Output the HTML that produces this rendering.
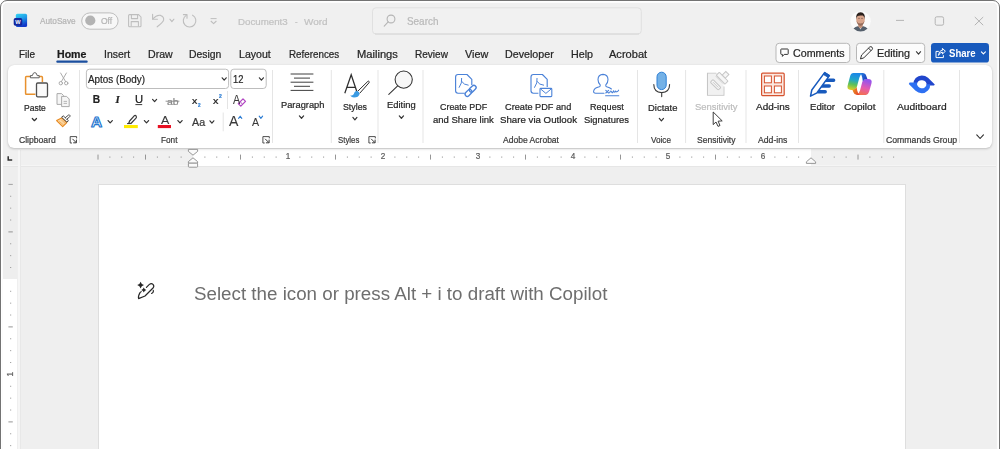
<!DOCTYPE html>
<html lang="en">
<head>
<meta charset="utf-8">
<title>Document3 - Word</title>
<style>
*{box-sizing:border-box;margin:0;padding:0}
html,body{width:1000px;height:449px;overflow:hidden;background:#fff}
body{font-family:"Liberation Sans", sans-serif;position:relative}
#win{position:absolute;left:0;top:0;width:1000px;height:470px;background:#f0f0f0;border:1.25px solid #737373;border-radius:7px;box-shadow:inset 0 0 0 1.8px #fff}
#docbg{position:absolute;left:3px;top:167px;width:993px;height:300px;background:#efefef}
#hline{position:absolute;left:3px;top:165.4px;width:993px;height:2px;background:linear-gradient(#f5f5f5 0,#f5f5f5 50%,#e6e6e6 50%,#e6e6e6 100%)}
#vline{position:absolute;left:18.4px;top:150px;width:3px;height:320px;background:linear-gradient(90deg,#f6f6f6 0,#f6f6f6 66%,#e8e8e8 66%,#e8e8e8 100%)}
#hrw{position:absolute;left:193px;top:149px;width:617.5px;height:17px;background:#fff}
#vrg{position:absolute;left:3px;top:167px;width:14px;height:112.4px;background:#eeeeee}
#vrw{position:absolute;left:3px;top:279.4px;width:14px;height:200px;background:#fff}
#ribbon{position:absolute;left:8px;top:65.4px;width:984px;height:82.2px;background:#fff;border-radius:6px;box-shadow:0 1px 2.5px rgba(0,0,0,.20),0 0 1px rgba(0,0,0,.10)}
#page{position:absolute;left:98px;top:184.4px;width:808px;height:300px;background:#fff;border:1px solid #dedede}
svg#ic{position:absolute;left:0;top:0;width:1000px;height:449px;overflow:visible}
#txt{position:absolute;left:0;top:0;width:1000px;height:449px;will-change:transform}
.x{position:absolute;-webkit-text-stroke:0.22px currentColor;white-space:nowrap;line-height:1;transform-origin:0 50%;display:block}
.rn{font-size:8.2px;color:#5e5e5e;text-align:center}
</style>
</head>
<body>
<div id="win"></div>
<div id="docbg"></div>
<div id="hline"></div>
<div id="vline"></div>
<div id="hrw"></div>
<div id="vrg"></div>
<div id="vrw"></div>
<div id="ribbon"></div>
<div id="page"></div>
<svg id="ic" viewBox="0 0 1000 449">
<defs>
<linearGradient id="wg" x1="0" y1="0" x2="0.35" y2="1"><stop offset="0" stop-color="#35d6f2"/><stop offset="0.5" stop-color="#1f9ae8"/><stop offset="1" stop-color="#1238c8"/></linearGradient>
<linearGradient id="cp1" x1="0.2" y1="0" x2="0" y2="1"><stop offset="0" stop-color="#1b8ae6"/><stop offset="0.35" stop-color="#22a7c8"/><stop offset="0.62" stop-color="#5cc05a"/><stop offset="1" stop-color="#f1d21c"/></linearGradient>
<linearGradient id="cp2" x1="0.3" y1="0" x2="0" y2="1"><stop offset="0" stop-color="#9a55ea"/><stop offset="0.45" stop-color="#e45bb0"/><stop offset="1" stop-color="#f6753a"/></linearGradient>
<linearGradient id="cp3" x1="0" y1="0" x2="1" y2="0.6"><stop offset="0" stop-color="#2786e4"/><stop offset="1" stop-color="#1d3fc0"/></linearGradient>
<linearGradient id="cp4" x1="0" y1="0" x2="1" y2="0.6"><stop offset="0" stop-color="#e8a01c"/><stop offset="1" stop-color="#e8482c"/></linearGradient>
<clipPath id="avc"><circle cx="860.6" cy="21.3" r="10.1"/></clipPath>
</defs>
<rect x="15.8" y="13.8" width="11.3" height="13.3" rx="1.6" fill="url(#wg)"/>
<rect x="13.7" y="18" width="8.6" height="7.7" rx="1.8" fill="#13269c"/>
<text x="18" y="23.9" font-family="Liberation Sans, sans-serif" font-weight="bold" font-size="5.6" fill="#fff" text-anchor="middle">W</text>
<rect x="81.7" y="12.9" width="36.4" height="16.3" rx="8.15" fill="#f7f7f7" stroke="#bebebe" stroke-width="1"/>
<circle cx="90.3" cy="20.5" r="5.1" fill="#b3b3b3"/>
<g fill="none" stroke="#bebebe" stroke-width="1.05" stroke-linejoin="round"><path d="M128.6 15.6 Q128.6 14.6 129.6 14.6 H138.6 L141 17 V25.8 Q141 26.8 140 26.8 H129.6 Q128.6 26.8 128.6 25.8 Z"/><path d="M131.4 14.8 V18.6 H137.6 V14.8"/><path d="M131.2 26.6 V21.6 H138.4 V26.6"/></g>
<g fill="none" stroke="#bebebe" stroke-width="1.1" stroke-linecap="round" stroke-linejoin="round"><path d="M152.6 14.4 V19.2 H157.4"/><path d="M152.8 19 Q156.6 14.6 160.6 15.4 Q164.2 16.6 163.6 20.2 Q163.2 22.2 157.2 26.8"/></g>
<path d="M169.88 19.23 L171.90 21.57 L173.92 19.23" fill="none" stroke="#bebebe" stroke-width="1.1" stroke-linecap="round" stroke-linejoin="round"/>
<g fill="none" stroke="#bebebe" stroke-width="1.1" stroke-linecap="round" stroke-linejoin="round"><path d="M186.2 15.4 A6.3 6.3 0 1 0 192.6 15.2"/><path d="M183.4 14.6 H187 V18.2"/></g>
<path d="M210.6 18.6 H216.6" stroke="#bebebe" stroke-width="1" /><path d="M210.8 21 L213.6 23.6 L216.4 21" fill="none" stroke="#bebebe" stroke-width="1.1" stroke-linejoin="round"/>
<rect x="372.5" y="7.8" width="268.8" height="26.2" rx="3.5" fill="#f1f1f1" stroke="#e0e0e0" stroke-width="1"/>
<path d="M375 34 H639" stroke="#d2d2d2" stroke-width="0.8"/>
<g fill="none" stroke="#b5b5b5" stroke-width="1.1" stroke-linecap="round"><circle cx="391" cy="19" r="3.9"/><path d="M388.2 21.9 L384.2 26.2"/></g>
<circle cx="860.6" cy="21.3" r="10.1" fill="#fbfbfb"/>
<g clip-path="url(#avc)"><path d="M851.6 34 Q852 27.6 857.6 26.2 L863.4 26.2 Q869 27.6 869.4 34 Z" fill="#55606c"/><path d="M858.6 26.2 L860.5 29.6 L862.4 26.2 Z" fill="#e9e4e2"/><path d="M858.2 23 H862.8 V26.6 L860.5 28.6 L858.2 26.6 Z" fill="#c08f78"/><ellipse cx="860.5" cy="19.4" rx="4.3" ry="5.9" fill="#d9a58c"/><path d="M856.1 19.6 Q855.4 12.4 860.6 12.2 Q865.6 12.4 864.9 19.6 Q864.6 16.4 862.8 15.6 Q859.2 15.2 857.6 16 Q856.4 17 856.1 19.6 Z" fill="#2b211d"/><path d="M856.6 21 Q857.4 25.6 860.5 25.7 Q863.6 25.6 864.4 21 Q863.4 23.6 860.5 23.6 Q857.6 23.6 856.6 21Z" fill="#6b4a3c" opacity="0.6"/><path d="M858.4 18.4 H859.6 M861.4 18.4 H862.6" stroke="#3a2a24" stroke-width="0.6"/></g>
<path d="M896 20.4 H904" stroke="#b4b4b4" stroke-width="1"/>
<rect x="935.2" y="16.8" width="8.4" height="8.4" rx="1.6" fill="none" stroke="#b4b4b4" stroke-width="1"/>
<path d="M974.8 17 L983.2 25.2 M983.2 17 L974.8 25.2" stroke="#b4b4b4" stroke-width="1"/>
<rect x="56.3" y="60.6" width="31.4" height="2.1" rx="1" fill="#1b4f9f"/>
<rect x="776" y="43.3" width="73.8" height="19.2" rx="3.2" fill="#fcfcfc" stroke="#b7b7b7" stroke-width="1"/>
<path d="M781.4 49 H787.6 Q788.2 49 788.2 49.6 V53.8 Q788.2 54.4 787.6 54.4 H784.2 L782.4 56.4 V54.4 H781.4 Q780.8 54.4 780.8 53.8 V49.6 Q780.8 49 781.4 49 Z" fill="none" stroke="#333" stroke-width="1" stroke-linejoin="round"/>
<rect x="856.5" y="43.3" width="68.2" height="19.2" rx="3.2" fill="#fcfcfc" stroke="#b7b7b7" stroke-width="1"/>
<g fill="none" stroke="#333" stroke-width="1" stroke-linejoin="round" stroke-linecap="round"><path d="M860.6 58.6 L861.6 55 L869.8 46.9 Q870.9 46.2 872 47.2 Q873 48.3 872.2 49.4 L864.1 57.6 Z"/><path d="M868.6 48.2 L871 50.6"/></g>
<path d="M916.39 51.73 L918.50 54.07 L920.61 51.73" fill="none" stroke="#333" stroke-width="1.1" stroke-linecap="round" stroke-linejoin="round"/>
<rect x="931" y="43" width="58" height="19.6" rx="3.2" fill="#185abd"/>
<g fill="none" stroke="#fff" stroke-width="1" stroke-linejoin="round" stroke-linecap="round"><path d="M938.4 51.4 H936 V57.6 H943.4 V55.6"/><path d="M938.6 55 Q939 50.6 942.4 50.4 V48.4 L945.4 51.2 L942.4 54 V52.2 Q940.2 52 938.6 55 Z"/></g>
<path d="M981.38 51.82 L983.40 53.98 L985.42 51.82" fill="none" stroke="#fff" stroke-width="1.1" stroke-linecap="round" stroke-linejoin="round"/>
<path d="M79.5 70 V143" stroke="#e5e5e5" stroke-width="1"/>
<path d="M272.5 70 V143" stroke="#e5e5e5" stroke-width="1"/>
<path d="M331.3 70 V143" stroke="#e5e5e5" stroke-width="1"/>
<path d="M378 70 V143" stroke="#e5e5e5" stroke-width="1"/>
<path d="M423 70 V143" stroke="#e5e5e5" stroke-width="1"/>
<path d="M637.5 70 V143" stroke="#e5e5e5" stroke-width="1"/>
<path d="M685.6 70 V143" stroke="#e5e5e5" stroke-width="1"/>
<path d="M746 70 V143" stroke="#e5e5e5" stroke-width="1"/>
<path d="M798.5 70 V143" stroke="#e5e5e5" stroke-width="1"/>
<path d="M883.8 70 V143" stroke="#e5e5e5" stroke-width="1"/>
<path d="M959.5 70 V143" stroke="#e5e5e5" stroke-width="1"/>
<path d="M227.5 91 V109" stroke="#e4e4e4" stroke-width="1"/>
<path d="M223.2 112.5 V131.3" stroke="#e4e4e4" stroke-width="1"/>
<path d="M30.6 76.6 H26.4 Q25.6 76.6 25.6 77.4 V93.4 Q25.6 94.2 26.4 94.2 H35.4 M39 76.6 H41.6 Q42.4 76.6 42.4 77.4 V82" fill="none" stroke="#e8912d" stroke-width="1.5" stroke-linejoin="round"/>
<path d="M30.4 77.8 V75.6 H32.4 Q32.9 72.6 34.8 72.6 Q36.7 72.6 37.2 75.6 H39.2 V77.8 Z" fill="#fff" stroke="#5f5f5f" stroke-width="1" stroke-linejoin="round"/>
<rect x="36.5" y="83" width="11" height="13.8" rx="1.2" fill="#fafafa" stroke="#4f4f4f" stroke-width="1.3"/>
<path d="M32.29 118.47 L34.40 120.72 L36.51 118.47" fill="none" stroke="#333" stroke-width="1.2" stroke-linecap="round" stroke-linejoin="round"/>
<g fill="none" stroke="#a6a6a6" stroke-width="0.95" stroke-linecap="round"><path d="M60.6 73 L65.6 81.6 M66.4 73 L61.4 81.6"/><circle cx="60.8" cy="83.2" r="1.7"/><circle cx="66.2" cy="83.2" r="1.7"/></g>
<g fill="#f6f6f6" stroke="#a6a6a6" stroke-width="0.95" stroke-linejoin="round"><path d="M57 93.6 H61.6 L63.6 95.6 V104.4 H57 Z"/><path d="M61.6 96.4 H66.6 L69.2 99 V106.6 H61.6 Z"/></g><path d="M63.6 101.4 H67 M63.6 103.4 H67" stroke="#a6a6a6" stroke-width="0.8"/>
<g stroke-linejoin="round" stroke-linecap="round"><path d="M56.6 120.6 L61.6 117.9 L66.8 122.5 L62.7 126.7 Z" fill="#fbd7a4" stroke="#e8891f" stroke-width="1.1"/><path d="M59.4 121.6 L63.4 124.8 M61.4 120 L65.2 123.2" stroke="#f0a347" stroke-width="0.7"/><path d="M61.9 117 L63.2 115.8 L68.4 120.6 L67.2 121.9 Z" fill="#fff" stroke="#4a4a4a" stroke-width="1"/><path d="M65.4 117.6 L68.6 115 Q69.6 114.6 70 115.6 Q70.2 116.4 69.6 116.9 L66.8 119.2" fill="#fff" stroke="#4a4a4a" stroke-width="1"/></g>
<path d="M76.60 138.40 V136.60 H70.20 V143.00 H72.00" fill="none" stroke="#3a3a3a" stroke-width="0.9"/><path d="M72.40 138.80 L76.20 142.60 M76.40 139.60 V142.80 H73.20" fill="none" stroke="#3a3a3a" stroke-width="1"/>
<rect x="86.4" y="69.2" width="142.2" height="19.3" rx="3" fill="#fff" stroke="#bdbdbd" stroke-width="1"/>
<rect x="230.8" y="69.2" width="35.4" height="19.3" rx="3" fill="#fff" stroke="#bdbdbd" stroke-width="1"/>
<path d="M222.18 77.78 L224.20 80.03 L226.22 77.78" fill="none" stroke="#333" stroke-width="1.2" stroke-linecap="round" stroke-linejoin="round"/>
<path d="M259.38 77.78 L261.40 80.03 L263.42 77.78" fill="none" stroke="#333" stroke-width="1.2" stroke-linecap="round" stroke-linejoin="round"/>
<path d="M135.4 104.6 H142.2" stroke="#222" stroke-width="0.9"/>
<path d="M152.58 99.38 L154.60 101.62 L156.62 99.38" fill="none" stroke="#333" stroke-width="1.2" stroke-linecap="round" stroke-linejoin="round"/>
<path d="M165.6 101.2 H179.4" stroke="#8a8a8a" stroke-width="0.9"/>
<path d="M238.3 103.6 L243 98.9 L245.5 101.4 L240.8 106.1 Z" fill="#fff" stroke="#b146c2" stroke-width="1.3" stroke-linejoin="round"/><path d="M240.2 101.8 L242.6 104.2" stroke="#b146c2" stroke-width="1"/>
<text x="96.5" y="126.6" font-family="Liberation Sans, sans-serif" font-weight="bold" font-size="15.4" text-anchor="middle" fill="#fff" stroke="#2577cf" stroke-width="1.2" stroke-linejoin="round">A</text>
<path d="M108.09 120.53 L110.20 122.87 L112.31 120.53" fill="none" stroke="#333" stroke-width="1.2" stroke-linecap="round" stroke-linejoin="round"/>
<path d="M128.6 123.4 L129.6 121 L134.2 115.8 Q135.4 115 136.2 116.2 Q136.8 117.2 136 118.2 L131.4 123 Z" fill="#fff" stroke="#3a3a3a" stroke-width="1.2" stroke-linejoin="round"/><path d="M127 123.6 H131.6" stroke="#3a3a3a" stroke-width="1"/>
<rect x="124" y="125" width="13.8" height="3.1" fill="#ffeb00"/>
<path d="M144.39 120.53 L146.50 122.87 L148.61 120.53" fill="none" stroke="#333" stroke-width="1.2" stroke-linecap="round" stroke-linejoin="round"/>
<rect x="157.8" y="125" width="13.2" height="3.1" fill="#e81123"/>
<path d="M177.89 120.53 L180.00 122.87 L182.11 120.53" fill="none" stroke="#333" stroke-width="1.2" stroke-linecap="round" stroke-linejoin="round"/>
<path d="M209.96 120.78 L211.90 123.03 L213.84 120.78" fill="none" stroke="#333" stroke-width="1.2" stroke-linecap="round" stroke-linejoin="round"/>
<path d="M238.6 118.4 L240.2 116.2 L241.8 118.4" fill="none" stroke="#2b7cd3" stroke-width="1.1" stroke-linejoin="round" stroke-linecap="round"/>
<path d="M259.2 116.2 L260.9 118.4 L262.6 116.2" fill="none" stroke="#2b7cd3" stroke-width="1.1" stroke-linejoin="round" stroke-linecap="round"/>
<path d="M269.30 138.40 V136.60 H262.90 V143.00 H264.70" fill="none" stroke="#3a3a3a" stroke-width="0.9"/><path d="M265.10 138.80 L268.90 142.60 M269.10 139.60 V142.80 H265.90" fill="none" stroke="#3a3a3a" stroke-width="1"/>
<path d="M290.6 74 H313.4 M294 78.1 H310 M290.6 82.2 H313.4 M294 86.3 H310 M290.6 90.4 H313.4" stroke="#3f3f3f" stroke-width="1"/>
<path d="M299.39 115.93 L301.50 118.27 L303.61 115.93" fill="none" stroke="#333" stroke-width="1.2" stroke-linecap="round" stroke-linejoin="round"/>
<path d="M344.8 93.2 L351.2 74.8 L357.4 93.2 M346.8 87.4 H355.4" fill="none" stroke="#2f2f2f" stroke-width="1.25" stroke-linejoin="miter"/>
<path d="M350.2 95.6 Q353.6 95.6 354.4 92.4 Q355.6 90.6 358 91.2 Q360 92.2 359.6 94 Q358.6 97.6 354 97.6 Q351.6 97.6 350.2 95.6 Z" fill="#3b9be3"/>
<path d="M358 91 L367.8 81.4 Q368.8 80.8 369.2 81.6 Q369.4 82.2 368.8 83 L359.8 93.2" fill="#fff" stroke="#2f2f2f" stroke-width="1" stroke-linejoin="round"/>
<path d="M352.88 117.43 L354.90 119.77 L356.92 117.43" fill="none" stroke="#333" stroke-width="1.2" stroke-linecap="round" stroke-linejoin="round"/>
<path d="M375.30 138.40 V136.60 H368.90 V143.00 H370.70" fill="none" stroke="#3a3a3a" stroke-width="0.9"/><path d="M371.10 138.80 L374.90 142.60 M375.10 139.60 V142.80 H371.90" fill="none" stroke="#3a3a3a" stroke-width="1"/>
<g fill="none" stroke="#333" stroke-width="1.05" stroke-linecap="round"><circle cx="403.7" cy="79.6" r="8.6" fill="#f7f7f7"/><path d="M397.4 86.2 L388.8 94.4"/></g>
<path d="M399.29 115.93 L401.40 118.27 L403.51 115.93" fill="none" stroke="#333" stroke-width="1.2" stroke-linecap="round" stroke-linejoin="round"/>
<path d="M458.0 74.5 H467.0 L471.8 79.3 V85.0 M464.6 93.2 H458.0 Q455.6 93.2 455.6 90.8 V76.9 Q455.6 74.5 458.0 74.5" fill="none" stroke="#4b82d8" stroke-width="1.15" stroke-linejoin="round"/><path d="M461.7 78.4 Q462.4 82.9 459.2 87.4 M461.9 81.7 Q463.8 84.9 468.2 85.2" fill="none" stroke="#4b82d8" stroke-width="1" stroke-linecap="round"/>
<g fill="none" stroke="#4b82d8" stroke-width="1.35"><rect x="-3.9" y="-2.2" width="7.8" height="4.4" rx="2.2" transform="translate(472.7 88.7) rotate(-45)"/><rect x="-3.9" y="-2.2" width="7.8" height="4.4" rx="2.2" transform="translate(468.5 92.9) rotate(-45)"/></g>
<path d="M533.4 74.5 H542.4 L547.2 79.3 V87.0 M538.4 93.2 H533.4 Q531.0 93.2 531.0 90.8 V76.9 Q531.0 74.5 533.4 74.5" fill="none" stroke="#4b82d8" stroke-width="1.15" stroke-linejoin="round"/><path d="M537.1 78.4 Q537.8 82.9 534.6 87.4 M537.3 81.7 Q539.2 84.9 543.6 85.2" fill="none" stroke="#4b82d8" stroke-width="1" stroke-linecap="round"/>
<rect x="540" y="88.4" width="11.8" height="8.2" rx="0.8" fill="#fff" stroke="#4b82d8" stroke-width="1.1"/><path d="M540.4 88.8 L545.9 93.4 L551.4 88.8" fill="none" stroke="#4b82d8" stroke-width="1"/>
<g fill="none" stroke="#4b82d8" stroke-width="1.1" stroke-linecap="round" stroke-linejoin="round"><path d="M604 93.2 H595.6 Q593.4 93.2 593.6 91.2 Q594 88 599.4 86.8 Q600.6 86.2 600.2 84.8 Q598 82.6 598 79.4 Q598.2 74.6 603 74.4 Q607.8 74.6 608 79.4 Q608 82.6 605.8 84.8 Q605.4 86.2 606.6 86.8 Q610 87.6 611.4 89"/><path d="M605.8 90.4 L608.6 93 M608.6 90.4 L605.8 93"/><path d="M609.6 92.8 Q610.8 89.4 611.8 92.2 Q612.6 93.6 613.6 90.8 Q614.6 93.6 615.6 91 Q616.8 93 618.6 90.2"/><path d="M605.6 95.8 H618.8"/></g>
<rect x="657" y="72.2" width="9.2" height="17.4" rx="4.6" fill="#74b1e6" stroke="#2f80d6" stroke-width="1"/>
<path d="M653.8 84.6 Q653.8 92.4 661.7 92.6 Q669.6 92.4 669.6 84.6 M661.7 92.8 V96.6" fill="none" stroke="#3a3a3a" stroke-width="1.1" stroke-linecap="round"/>
<path d="M659.29 118.38 L661.40 120.81 L663.51 118.38" fill="none" stroke="#333" stroke-width="1.2" stroke-linecap="round" stroke-linejoin="round"/>
<path d="M716.4 73.2 H707.5 V95.2 H723.9 V86.6" fill="#f1f1f1" stroke="#c6c6c6" stroke-width="1.1"/><path d="M708 73.7 H716 L723.4 86 V94.7 H708 Z" fill="#f1f1f1"/>
<g transform="translate(715.6 84.8) rotate(45)" fill="#f6f6f6" stroke="#c6c6c6" stroke-width="1"><rect x="-5.6" y="-1.9" width="11.2" height="3.8" rx="0.9"/><path d="M-3.8 0 H3.8" stroke-width="0.9"/><rect x="-6.2" y="-11.4" width="12.4" height="4.2" rx="0.5"/><path d="M-5.8 -6.2 H5.8" stroke-width="0.8"/><rect x="-2.2" y="-16.6" width="4.4" height="5" /></g>
<path d="M713.2 112 V124.6 L716 122 L718 126.4 L720 125.5 L718.1 121.2 L722.2 120.9 Z" fill="#fff" stroke="#2a2a2a" stroke-width="0.9" stroke-linejoin="round"/>
<rect x="761.6" y="73.2" width="22.6" height="22.4" rx="1" fill="#fbe9e1" stroke="#d6532f" stroke-width="1.2"/>
<rect x="764.4" y="76" width="7" height="6.8" fill="#fff" stroke="#d6532f" stroke-width="1"/>
<rect x="774.4" y="76" width="7" height="6.8" fill="#fff" stroke="#d6532f" stroke-width="1"/>
<rect x="764.4" y="86" width="7" height="6.8" fill="#fff" stroke="#d6532f" stroke-width="1"/>
<rect x="774.4" y="86" width="7" height="6.8" fill="#fff" stroke="#d6532f" stroke-width="1"/>
<path d="M826.2 80.2 H833.6 M822 86 H829.2 M818.2 91.8 H825.2" stroke="#185abd" stroke-width="3.5" stroke-linecap="round"/>
<path d="M810.5 96.2 L811.8 90 L824.6 72.6 L829.4 75.6 L817 92.8 Z" fill="#fff" stroke="#185abd" stroke-width="1.5" stroke-linejoin="round"/><path d="M823.2 74.4 L824.8 72.4 L829.6 75.4 L828.2 77.4 Z" fill="#185abd" stroke="#185abd" stroke-width="0.8" stroke-linejoin="round"/>
<path d="M853.4 73 H863 Q860.4 74 859.4 77.4 L857.2 85.8 Q856.2 89.8 852.6 89.9 H851 Q846.4 89.8 847.7 85.2 L850.1 76.2 Q851 73 853.4 73 Z" fill="url(#cp1)"/>
<path d="M866 94.9 H856.2 Q859 94 860 90.6 L862.2 82.2 Q863.2 79.1 866.6 79 H868 Q872.6 79.1 871.5 83.2 L869.1 91.8 Q868.2 94.9 866 94.9 Z" fill="url(#cp2)"/>
<path d="M859.6 73 H862.6 Q865.4 73 866.2 75.8 L867.4 79.1 Q864 79 862.8 81.2 L862.2 77.4 Q861.8 74.2 859.6 73 Z" fill="url(#cp3)"/>
<path d="M859.8 94.9 H857 Q854.2 94.9 853.4 92.2 L852.4 89.8 Q855.6 89.4 856.6 87 L857.2 90.6 Q857.8 93.8 859.8 94.9 Z" fill="url(#cp4)"/>
<path d="M913.4 84.2 A8.4 8.4 0 0 1 921.8 75.4 Q925.4 75.4 928 77.8 L934.8 84.5 L934 85.4 H926.6 A4.9 4.9 0 0 0 916.9 84.2 Z" fill="#2146cc"/>
<path d="M930.2 84.2 A8.4 8.4 0 0 1 921.8 93.2 Q918.2 93.2 915.6 90.8 L908.8 84.1 L909.6 82.6 H917 A4.9 4.9 0 0 0 926.7 84.2 Z" fill="#2e70f2"/>
<path d="M976.76 134.90 L980.10 138.50 L983.44 134.90" fill="none" stroke="#2a2a2a" stroke-width="1.1" stroke-linecap="round" stroke-linejoin="round"/>
<path d="M98.00 154.6 V159.6" stroke="#8a8a8a" stroke-width="0.9"/>
<rect x="109.38" y="156.5" width="1" height="1.2" fill="#9a9a9a"/>
<rect x="121.25" y="156.5" width="1" height="1.2" fill="#9a9a9a"/>
<rect x="133.12" y="156.5" width="1" height="1.2" fill="#9a9a9a"/>
<path d="M145.50 154.6 V159.6" stroke="#8a8a8a" stroke-width="0.9"/>
<rect x="156.88" y="156.5" width="1" height="1.2" fill="#9a9a9a"/>
<rect x="168.75" y="156.5" width="1" height="1.2" fill="#9a9a9a"/>
<rect x="180.62" y="156.5" width="1" height="1.2" fill="#9a9a9a"/>
<rect x="204.38" y="156.5" width="1" height="1.2" fill="#9a9a9a"/>
<rect x="216.25" y="156.5" width="1" height="1.2" fill="#9a9a9a"/>
<rect x="228.12" y="156.5" width="1" height="1.2" fill="#9a9a9a"/>
<path d="M240.50 154.6 V159.6" stroke="#8a8a8a" stroke-width="0.9"/>
<rect x="251.88" y="156.5" width="1" height="1.2" fill="#9a9a9a"/>
<rect x="263.75" y="156.5" width="1" height="1.2" fill="#9a9a9a"/>
<rect x="275.62" y="156.5" width="1" height="1.2" fill="#9a9a9a"/>
<rect x="299.38" y="156.5" width="1" height="1.2" fill="#9a9a9a"/>
<rect x="311.25" y="156.5" width="1" height="1.2" fill="#9a9a9a"/>
<rect x="323.12" y="156.5" width="1" height="1.2" fill="#9a9a9a"/>
<path d="M335.50 154.6 V159.6" stroke="#8a8a8a" stroke-width="0.9"/>
<rect x="346.88" y="156.5" width="1" height="1.2" fill="#9a9a9a"/>
<rect x="358.75" y="156.5" width="1" height="1.2" fill="#9a9a9a"/>
<rect x="370.62" y="156.5" width="1" height="1.2" fill="#9a9a9a"/>
<rect x="394.38" y="156.5" width="1" height="1.2" fill="#9a9a9a"/>
<rect x="406.25" y="156.5" width="1" height="1.2" fill="#9a9a9a"/>
<rect x="418.12" y="156.5" width="1" height="1.2" fill="#9a9a9a"/>
<path d="M430.50 154.6 V159.6" stroke="#8a8a8a" stroke-width="0.9"/>
<rect x="441.88" y="156.5" width="1" height="1.2" fill="#9a9a9a"/>
<rect x="453.75" y="156.5" width="1" height="1.2" fill="#9a9a9a"/>
<rect x="465.62" y="156.5" width="1" height="1.2" fill="#9a9a9a"/>
<rect x="489.38" y="156.5" width="1" height="1.2" fill="#9a9a9a"/>
<rect x="501.25" y="156.5" width="1" height="1.2" fill="#9a9a9a"/>
<rect x="513.12" y="156.5" width="1" height="1.2" fill="#9a9a9a"/>
<path d="M525.50 154.6 V159.6" stroke="#8a8a8a" stroke-width="0.9"/>
<rect x="536.88" y="156.5" width="1" height="1.2" fill="#9a9a9a"/>
<rect x="548.75" y="156.5" width="1" height="1.2" fill="#9a9a9a"/>
<rect x="560.62" y="156.5" width="1" height="1.2" fill="#9a9a9a"/>
<rect x="584.38" y="156.5" width="1" height="1.2" fill="#9a9a9a"/>
<rect x="596.25" y="156.5" width="1" height="1.2" fill="#9a9a9a"/>
<rect x="608.12" y="156.5" width="1" height="1.2" fill="#9a9a9a"/>
<path d="M620.50 154.6 V159.6" stroke="#8a8a8a" stroke-width="0.9"/>
<rect x="631.88" y="156.5" width="1" height="1.2" fill="#9a9a9a"/>
<rect x="643.75" y="156.5" width="1" height="1.2" fill="#9a9a9a"/>
<rect x="655.62" y="156.5" width="1" height="1.2" fill="#9a9a9a"/>
<rect x="679.38" y="156.5" width="1" height="1.2" fill="#9a9a9a"/>
<rect x="691.25" y="156.5" width="1" height="1.2" fill="#9a9a9a"/>
<rect x="703.12" y="156.5" width="1" height="1.2" fill="#9a9a9a"/>
<path d="M715.50 154.6 V159.6" stroke="#8a8a8a" stroke-width="0.9"/>
<rect x="726.88" y="156.5" width="1" height="1.2" fill="#9a9a9a"/>
<rect x="738.75" y="156.5" width="1" height="1.2" fill="#9a9a9a"/>
<rect x="750.62" y="156.5" width="1" height="1.2" fill="#9a9a9a"/>
<rect x="774.38" y="156.5" width="1" height="1.2" fill="#9a9a9a"/>
<rect x="786.25" y="156.5" width="1" height="1.2" fill="#9a9a9a"/>
<rect x="798.12" y="156.5" width="1" height="1.2" fill="#9a9a9a"/>
<rect x="821.88" y="156.5" width="1" height="1.2" fill="#9a9a9a"/>
<rect x="833.75" y="156.5" width="1" height="1.2" fill="#9a9a9a"/>
<rect x="845.62" y="156.5" width="1" height="1.2" fill="#9a9a9a"/>
<path d="M858.00 154.6 V159.6" stroke="#8a8a8a" stroke-width="0.9"/>
<rect x="869.38" y="156.5" width="1" height="1.2" fill="#9a9a9a"/>
<rect x="881.25" y="156.5" width="1" height="1.2" fill="#9a9a9a"/>
<rect x="893.12" y="156.5" width="1" height="1.2" fill="#9a9a9a"/>
<rect x="10.1" y="195.77" width="1.1" height="1" fill="#9a9a9a"/>
<rect x="10.1" y="207.65" width="1.1" height="1" fill="#9a9a9a"/>
<rect x="10.1" y="219.52" width="1.1" height="1" fill="#9a9a9a"/>
<path d="M8.4 231.90 H12.8" stroke="#8a8a8a" stroke-width="0.9"/>
<rect x="10.1" y="243.27" width="1.1" height="1" fill="#9a9a9a"/>
<rect x="10.1" y="255.15" width="1.1" height="1" fill="#9a9a9a"/>
<rect x="10.1" y="267.02" width="1.1" height="1" fill="#9a9a9a"/>
<rect x="10.1" y="290.77" width="1.1" height="1" fill="#9a9a9a"/>
<rect x="10.1" y="302.65" width="1.1" height="1" fill="#9a9a9a"/>
<rect x="10.1" y="314.52" width="1.1" height="1" fill="#9a9a9a"/>
<path d="M8.4 326.90 H12.8" stroke="#8a8a8a" stroke-width="0.9"/>
<rect x="10.1" y="338.27" width="1.1" height="1" fill="#9a9a9a"/>
<rect x="10.1" y="350.15" width="1.1" height="1" fill="#9a9a9a"/>
<rect x="10.1" y="362.02" width="1.1" height="1" fill="#9a9a9a"/>
<rect x="10.1" y="385.77" width="1.1" height="1" fill="#9a9a9a"/>
<rect x="10.1" y="397.65" width="1.1" height="1" fill="#9a9a9a"/>
<rect x="10.1" y="409.52" width="1.1" height="1" fill="#9a9a9a"/>
<path d="M8.4 421.90 H12.8" stroke="#8a8a8a" stroke-width="0.9"/>
<rect x="10.1" y="433.27" width="1.1" height="1" fill="#9a9a9a"/>
<rect x="10.1" y="445.15" width="1.1" height="1" fill="#9a9a9a"/>
<path d="M8.4 184.4 H12.8" stroke="#8e8e8e" stroke-width="0.8"/>
<path d="M8.2 156.2 V160 H12.2" fill="none" stroke="#2e2e2e" stroke-width="1.5"/>
<path d="M188.4 149.4 H197.6 V151.4 L193 155.2 L188.4 151.4 Z" fill="#fafafa" stroke="#8c8c8c" stroke-width="0.9" stroke-linejoin="round"/>
<path d="M188.4 161.6 L193 157.8 L197.6 161.6 V163.2 H188.4 Z" fill="#fafafa" stroke="#8c8c8c" stroke-width="0.9" stroke-linejoin="round"/>
<rect x="188.4" y="163.2" width="9.2" height="4" rx="0.8" fill="#fafafa" stroke="#8c8c8c" stroke-width="0.9"/>
<path d="M806.4 163.4 V161.8 L811 157.8 L815.6 161.8 V163.4 Z" fill="#fafafa" stroke="#8c8c8c" stroke-width="0.9" stroke-linejoin="round"/>
<path d="M140.6 281.70000000000005 Q141.29999999999998 284.40000000000003 144.0 285.1 Q141.29999999999998 285.8 140.6 288.5 Q139.9 285.8 137.2 285.1 Q139.9 284.40000000000003 140.6 281.70000000000005 Z" fill="#262626"/>
<path d="M143.8 287.4 Q144.35000000000002 289.34999999999997 146.3 289.9 Q144.35000000000002 290.45 143.8 292.4 Q143.25 290.45 141.3 289.9 Q143.25 289.34999999999997 143.8 287.4 Z" fill="#262626"/>
<path d="M146.4 287.4 L149.4 284.4 Q151.4 282.8 153 284.4 Q154.6 286.2 153 288 L145 296 L138.6 298.6 Q137.8 296.4 140 292.6 L141.2 291.6" fill="none" stroke="#262626" stroke-width="1.15" stroke-linecap="round" stroke-linejoin="round"/>
<path d="M153.3 290.4 Q153.8 292.6 151.6 293.5" fill="none" stroke="#262626" stroke-width="1.1" stroke-linecap="round"/>
</svg>
<div id="txt">
<span class="x" id="t0" style="left:40.30px;top:17.00px;font-size:8.6px;color:#b4b4b4;transform:scaleX(0.9549);">AutoSave</span>
<span class="x" id="t1" style="left:101.20px;top:17.00px;font-size:8.6px;color:#b4b4b4;transform:scaleX(0.9901);">Off</span>
<span class="x" id="t2" style="left:238.00px;top:18.00px;font-size:9.3px;color:#c2c2c2;transform:scaleX(1.0453);">Document3</span>
<span class="x" id="t3" style="left:295.00px;top:18.00px;font-size:9.3px;color:#c2c2c2;transform:scaleX(0.8362);">-</span>
<span class="x" id="t4" style="left:303.80px;top:18.00px;font-size:9.3px;color:#c2c2c2;transform:scaleX(1.0704);">Word</span>
<span class="x" id="t5" style="left:406.60px;top:17.00px;font-size:10.2px;color:#b9b9b9;transform:scaleX(0.9727);">Search</span>
<span class="x" id="t6" style="left:18.80px;top:50.00px;font-size:10.2px;color:#262626;transform:scaleX(0.9743);">File</span>
<span class="x" id="t7" style="left:56.90px;top:50.00px;font-size:10.2px;color:#1a1a1a;font-weight:bold;transform:scaleX(1.0384);">Home</span>
<span class="x" id="t8" style="left:104.10px;top:50.00px;font-size:10.2px;color:#262626;transform:scaleX(1.0242);">Insert</span>
<span class="x" id="t9" style="left:147.90px;top:50.00px;font-size:10.2px;color:#262626;transform:scaleX(1.0386);">Draw</span>
<span class="x" id="t10" style="left:189.10px;top:50.00px;font-size:10.2px;color:#262626;transform:scaleX(1.0183);">Design</span>
<span class="x" id="t11" style="left:238.50px;top:50.00px;font-size:10.2px;color:#262626;transform:scaleX(1.0394);">Layout</span>
<span class="x" id="t12" style="left:289.10px;top:50.00px;font-size:10.2px;color:#262626;transform:scaleX(0.9634);">References</span>
<span class="x" id="t13" style="left:357.00px;top:50.00px;font-size:10.2px;color:#262626;transform:scaleX(1.0943);">Mailings</span>
<span class="x" id="t14" style="left:415.40px;top:50.00px;font-size:10.2px;color:#262626;transform:scaleX(0.9848);">Review</span>
<span class="x" id="t15" style="left:464.80px;top:50.00px;font-size:10.2px;color:#262626;transform:scaleX(1.0636);">View</span>
<span class="x" id="t16" style="left:504.70px;top:50.00px;font-size:10.2px;color:#262626;transform:scaleX(1.0509);">Developer</span>
<span class="x" id="t17" style="left:570.60px;top:50.00px;font-size:10.2px;color:#262626;transform:scaleX(1.0547);">Help</span>
<span class="x" id="t18" style="left:609.20px;top:50.00px;font-size:10.2px;color:#262626;transform:scaleX(1.0852);">Acrobat</span>
<span class="x" id="t19" style="left:792.80px;top:49.00px;font-size:10.4px;color:#262626;transform:scaleX(1.0272);">Comments</span>
<span class="x" id="t20" style="left:877.20px;top:49.00px;font-size:10.4px;color:#262626;transform:scaleX(1.0383);">Editing</span>
<span class="x" id="t21" style="left:948.70px;top:49.00px;font-size:10.2px;color:#ffffff;font-weight:bold;-webkit-text-stroke:0;transform:scaleX(0.9425);">Share</span>
<span class="x" id="t22" style="left:88.20px;top:75.00px;font-size:10.4px;color:#262626;transform:scaleX(0.9490);">Aptos (Body)</span>
<span class="x" id="t23" style="left:232.60px;top:75.00px;font-size:10.4px;color:#262626;transform:scaleX(0.8995);">12</span>
<span class="x" id="t24" style="left:23.80px;top:103.00px;font-size:9.6px;color:#262626;transform:scaleX(0.8881);">Paste</span>
<span class="x" id="t25" style="left:19.40px;top:136.00px;font-size:8.8px;color:#3a3a3a;transform:scaleX(0.9773);">Clipboard</span>
<span class="x" id="t26" style="left:161.00px;top:136.00px;font-size:8.8px;color:#3a3a3a;transform:scaleX(0.9370);">Font</span>
<span class="x" id="t27" style="left:337.50px;top:136.00px;font-size:8.8px;color:#3a3a3a;transform:scaleX(0.8887);">Styles</span>
<span class="x" id="t28" style="left:502.50px;top:136.00px;font-size:8.8px;color:#3a3a3a;transform:scaleX(0.9702);">Adobe Acrobat</span>
<span class="x" id="t29" style="left:651.30px;top:136.00px;font-size:8.8px;color:#3a3a3a;transform:scaleX(0.9289);">Voice</span>
<span class="x" id="t30" style="left:696.50px;top:136.00px;font-size:8.8px;color:#3a3a3a;transform:scaleX(0.9720);">Sensitivity</span>
<span class="x" id="t31" style="left:757.50px;top:136.00px;font-size:8.8px;color:#3a3a3a;transform:scaleX(0.9856);">Add-ins</span>
<span class="x" id="t32" style="left:885.90px;top:136.00px;font-size:8.8px;color:#3a3a3a;transform:scaleX(0.9892);">Commands Group</span>
<span class="x" id="t33" style="left:280.60px;top:100.00px;font-size:9.6px;color:#262626;transform:scaleX(0.9685);">Paragraph</span>
<span class="x" id="t34" style="left:343.00px;top:102.00px;font-size:9.6px;color:#262626;transform:scaleX(0.9181);">Styles</span>
<span class="x" id="t35" style="left:386.90px;top:100.00px;font-size:9.6px;color:#262626;transform:scaleX(0.9781);">Editing</span>
<span class="x" id="t36" style="left:439.80px;top:102.00px;font-size:9.6px;color:#262626;transform:scaleX(0.9298);">Create PDF</span>
<span class="x" id="t37" style="left:433.00px;top:115.00px;font-size:9.6px;color:#262626;transform:scaleX(0.9911);">and Share link</span>
<span class="x" id="t38" style="left:505.00px;top:102.00px;font-size:9.6px;color:#262626;transform:scaleX(0.9563);">Create PDF and</span>
<span class="x" id="t39" style="left:500.00px;top:115.00px;font-size:9.6px;color:#262626;transform:scaleX(1.0096);">Share via Outlook</span>
<span class="x" id="t40" style="left:589.80px;top:102.00px;font-size:9.6px;color:#262626;transform:scaleX(0.9431);">Request</span>
<span class="x" id="t41" style="left:583.80px;top:115.00px;font-size:9.6px;color:#262626;transform:scaleX(0.9809);">Signatures</span>
<span class="x" id="t42" style="left:647.50px;top:103.00px;font-size:9.6px;color:#262626;transform:scaleX(0.9846);">Dictate</span>
<span class="x" id="t43" style="left:695.00px;top:102.00px;font-size:9.6px;color:#bdbdbd;transform:scaleX(0.9841);">Sensitivity</span>
<span class="x" id="t44" style="left:756.30px;top:102.00px;font-size:9.6px;color:#262626;transform:scaleX(1.0359);">Add-ins</span>
<span class="x" id="t45" style="left:810.00px;top:102.00px;font-size:9.6px;color:#262626;transform:scaleX(0.9975);">Editor</span>
<span class="x" id="t46" style="left:844.00px;top:102.00px;font-size:9.6px;color:#262626;transform:scaleX(1.0577);">Copilot</span>
<span class="x" id="t47" style="left:897.30px;top:102.00px;font-size:9.6px;color:#262626;transform:scaleX(1.0688);">Auditboard</span>
<span class="x" id="t48" style="left:92.80px;top:95.00px;font-size:10.2px;color:#222;font-weight:bold;transform:scaleX(1.0000);">B</span>
<span class="x" id="t49" style="left:115.50px;top:94.00px;font-size:10.8px;color:#222;font-family:'Liberation Serif',serif;font-style:italic;font-weight:bold;transform:scaleX(1.0000);">I</span>
<span class="x" id="t50" style="left:134.70px;top:95.00px;font-size:10.2px;color:#222;transform:scaleX(1.1006);">U</span>
<span class="x" id="t51" style="left:166.80px;top:97.00px;font-size:9.6px;color:#8a8a8a;transform:scaleX(1.0870);">ab</span>
<span class="x" id="t52" style="left:191.60px;top:96.00px;font-size:9.6px;color:#222;transform:scaleX(1.1049);">x</span>
<span class="x" id="t53" style="left:197.60px;top:103.00px;font-size:5.6px;color:#2b7cd3;font-weight:bold;transform:scaleX(0.8320);">2</span>
<span class="x" id="t54" style="left:213.00px;top:96.00px;font-size:9.6px;color:#222;transform:scaleX(1.1257);">x</span>
<span class="x" id="t55" style="left:219.20px;top:94.00px;font-size:5.6px;color:#2b7cd3;font-weight:bold;transform:scaleX(0.8960);">2</span>
<span class="x" id="t56" style="left:233.00px;top:94.00px;font-size:12.6px;color:#3a3a3a;-webkit-text-stroke:0.08px currentColor;transform:scaleX(0.8565);">A</span>
<span class="x" id="t57" style="left:160.70px;top:115.00px;font-size:11.4px;color:#3a3a3a;-webkit-text-stroke:0.08px currentColor;transform:scaleX(1.0908);">A</span>
<span class="x" id="t58" style="left:191.90px;top:118.00px;font-size:10.2px;color:#3a3a3a;transform:scaleX(1.0506);">Aa</span>
<span class="x" id="t59" style="left:229.40px;top:114.00px;font-size:14.2px;color:#3a3a3a;-webkit-text-stroke:0.08px currentColor;transform:scaleX(0.9927);">A</span>
<span class="x" id="t60" style="left:252.30px;top:117.00px;font-size:10.8px;color:#3a3a3a;-webkit-text-stroke:0.08px currentColor;transform:scaleX(0.9857);">A</span>
<span class="x" id="t61" style="left:193.80px;top:286.00px;font-size:17.6px;color:#6e6e6e;-webkit-text-stroke:0;transform:scaleX(1.0662);">Select the icon or press Alt + i to draft with Copilot</span>
<span class="x rn" style="left:284.00px;top:153.2px;width:8px">1</span>
<span class="x rn" style="left:379.00px;top:153.2px;width:8px">2</span>
<span class="x rn" style="left:474.00px;top:153.2px;width:8px">3</span>
<span class="x rn" style="left:569.00px;top:153.2px;width:8px">4</span>
<span class="x rn" style="left:664.00px;top:153.2px;width:8px">5</span>
<span class="x rn" style="left:759.00px;top:153.2px;width:8px">6</span>
<span class="x rn" style="left:6.6px;top:370.4px;width:8px;transform:rotate(-90deg);transform-origin:50% 50%">1</span>
</div>
</body>
</html>
